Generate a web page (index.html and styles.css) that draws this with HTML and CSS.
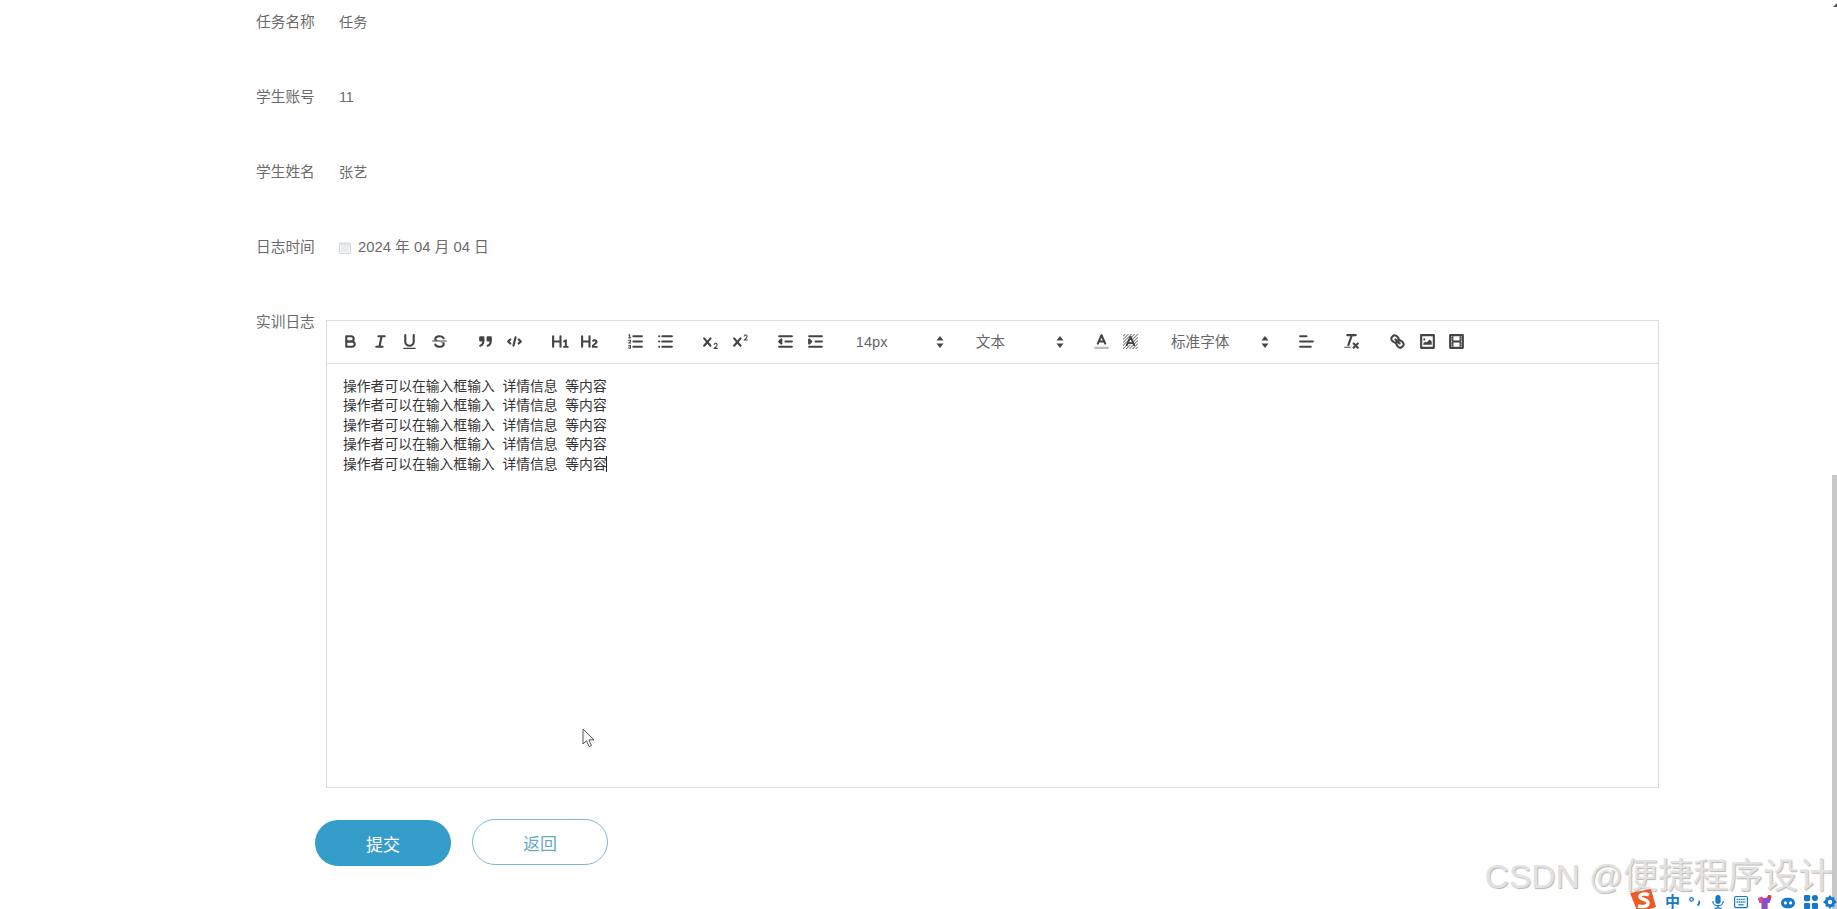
FILE: index.html
```html
<!DOCTYPE html>
<html lang="en">
<head>
    <meta charset="UTF-8">
    <title>实训日志</title>
    <link rel="stylesheet" href="styles.css">
</head>
<body>
    <form class="log-form">
        <div class="field"><label class="field-label">任务名称</label><span class="field-value">任务</span></div>
        <div class="field"><label class="field-label">学生账号</label><span class="field-value">11</span></div>
        <div class="field"><label class="field-label">学生姓名</label><span class="field-value">张艺</span></div>
        <div class="field">
            <label class="field-label">日志时间</label>
            <span class="field-value date-value">
                <svg class="date-icon" viewBox="0 0 12 13"><path d="M.5 2h11v10.5H.5z" fill="#f4f5f7" stroke="#d5d8de"/><path d="M.5 2h11v2.5H.5z" fill="#dfe2e7"/><path d="M2 6h8M2 8h8M2 10h8" stroke="#dfe2e7"/></svg>
                2024 年 04 月 04 日
            </span>
        </div>
        <div class="field editor-field">
            <label class="field-label">实训日志</label>
            <div class="editor">
                <div class="toolbar">
                    <span class="formats">
                        <button type="button" class="tb"><svg viewBox="0 0 18 18"><path class="st" d="M5,4H9.5A2.5,2.5,0,0,1,12,6.5v0A2.5,2.5,0,0,1,9.5,9H5A0,0,0,0,1,5,9V4A0,0,0,0,1,5,4Z"/><path class="st" d="M5,9h5.5A2.5,2.5,0,0,1,13,11.5v0A2.5,2.5,0,0,1,10.5,14H5a0,0,0,0,1,0,0V9A0,0,0,0,1,5,9Z"/></svg></button>
                        <button type="button" class="tb"><svg viewBox="0 0 18 18"><path class="st" d="M7 4h6M5 14h6M8 14l2-10"/></svg></button>
                        <button type="button" class="tb"><svg viewBox="0 0 18 18"><path class="st" d="M5,3V9a4.012,4.012,0,0,0,4,4H9a4.012,4.012,0,0,0,4-4V3"/><rect class="fl" height="1" rx="0.5" width="12" x="3" y="15"/></svg></button>
                        <button type="button" class="tb"><svg viewBox="0 0 18 18"><path class="thin" d="M15.5 8.5h-13"/><path class="fl" d="M9.007,8C6.542,7.791,6,7.519,6,6.5,6,5.792,7.283,5,9,5c1.571,0,2.765.679,2.969,1.309a1,1,0,0,0,1.9-.617C13.356,4.106,11.354,3,9,3,6.2,3,4,4.538,4,6.5a3.2,3.2,0,0,0,.5,1.843Z"/><path class="fl" d="M8.984,10C11.457,10.208,12,10.479,12,11.5c0,.708-1.283,1.5-3,1.5-1.571,0-2.765-.679-2.969-1.309a1,1,0,1,0-1.9.617C4.644,13.894,6.646,15,9,15c2.8,0,5-1.538,5-3.5a3.2,3.2,0,0,0-.5-1.843Z"/></svg></button>
                    </span>
                    <span class="formats">
                        <button type="button" class="tb"><svg viewBox="0 0 18 18"><rect class="fl st" height="3" width="3" x="4" y="5"/><rect class="fl st" height="3" width="3" x="11" y="5"/><path class="st" d="M7,8c0,4.031-3,5-3,5"/><path class="st" d="M14,8c0,4.031-3,5-3,5"/></svg></button>
                        <button type="button" class="tb"><svg viewBox="0 0 18 18"><path class="st" d="M5 7 3 9l2 2M13 7l2 2-2 2M10 5l-2 8"/></svg></button>
                    </span>
                    <span class="formats">
                        <button type="button" class="tb"><svg viewBox="0 0 18 18"><path class="fl" d="M10,4V14a1,1,0,0,1-2,0V10H3v4a1,1,0,0,1-2,0V4A1,1,0,0,1,3,4V8H8V4a1,1,0,0,1,2,0Zm6.06787,9.209H14.98975V7.59863a.54085.54085,0,0,0-.605-.60547h-.62744a1.01119,1.01119,0,0,0-.748.29688L11.645,8.56641a.5435.5435,0,0,0-.022.8584l.28613.30762a.53861.53861,0,0,0,.84717.0332l.09912-.08789a1.2137,1.2137,0,0,0,.2417-.35254h.02246s-.01123.30859-.01123.60547V13.209H12.041a.54085.54085,0,0,0-.605.60547v.43945a.54085.54085,0,0,0,.605.60547h4.02686a.54085.54085,0,0,0,.605-.60547v-.43945A.54085.54085,0,0,0,16.06787,13.209Z"/></svg></button>
                        <button type="button" class="tb"><svg viewBox="0 0 18 18"><path class="fl" d="M16.73975,13.81445v.43945a.54085.54085,0,0,1-.605.60547H11.855a.58392.58392,0,0,1-.64893-.60547V14.0127c0-2.90527,3.39941-3.42187,3.39941-4.55469a.77675.77675,0,0,0-.84717-.78125,1.17684,1.17684,0,0,0-.83594.38477c-.2749.26367-.561.374-.85791.13184l-.4292-.34082c-.30811-.24219-.38525-.51758-.1543-.81445a2.97155,2.97155,0,0,1,2.45361-1.17676,2.45393,2.45393,0,0,1,2.68408,2.40918c0,2.45312-3.1792,2.92676-3.27832,3.93848h2.79443A.54085.54085,0,0,1,16.73975,13.81445ZM9,3A.99974.99974,0,0,0,8,4V8H3V4A1,1,0,0,0,1,4V14a1,1,0,0,0,2,0V10H8v4a1,1,0,0,0,2,0V4A.99974.99974,0,0,0,9,3Z"/></svg></button>
                    </span>
                    <span class="formats">
                        <button type="button" class="tb"><svg viewBox="0 0 18 18"><path class="st" d="M7 4h8M7 9h8M7 14h8"/><path class="thin" d="M2.5 5.5h2"/><path class="fl" d="M3.5,6A0.5,0.5,0,0,1,3,5.5V3.085l-0.276.138A0.5,0.5,0,0,1,2.053,3c-0.124-.247-0.023-0.324.224-0.447l1-.5A0.5,0.5,0,0,1,4,2.5v3A0.5,0.5,0,0,1,3.5,6Z"/><path class="thin" d="M4.5,10.5h-2c0-.234,1.85-1.076,1.85-2.234A0.959,0.959,0,0,0,2.5,8.156"/><path class="thin" d="M2.5,14.846a0.959,0.959,0,0,0,1.85-.109A0.7,0.7,0,0,0,3.75,14a0.688,0.688,0,0,0,.6-0.736,0.959,0.959,0,0,0-1.85-.109"/></svg></button>
                        <button type="button" class="tb"><svg viewBox="0 0 18 18"><path class="st" d="M6 4h9M6 9h9M6 14h9M3 4h0M3 9h0M3 14h0"/></svg></button>
                    </span>
                    <span class="formats">
                        <button type="button" class="tb"><svg viewBox="0 0 18 18"><path class="fl" d="M15.5,15H13.861a3.858,3.858,0,0,0,1.914-2.975,1.8,1.8,0,0,0-1.6-1.751A1.921,1.921,0,0,0,12.021,11.7a0.50013,0.50013,0,1,0,.957.291h0a0.914,0.914,0,0,1,1.053-.725,0.81,0.81,0,0,1,.744.762c0,1.076-1.16971,1.86982-1.93971,2.43082A1.45639,1.45639,0,0,0,12,15.5a0.5,0.5,0,0,0,.5.5h3A0.5,0.5,0,0,0,15.5,15Z"/><path class="fl" d="M9.65,5.241a1,1,0,0,0-1.409.108L6,7.964,3.759,5.349A1,1,0,0,0,2.192,6.59178Q2.21541,6.6213,2.241,6.649L4.684,9.5,2.241,12.35A1,1,0,0,0,3.71,13.70722q0.02557-.02768.049-0.05722L6,11.036,8.241,13.65a1,1,0,1,0,1.567-1.24277Q9.78459,12.3777,9.759,12.35L7.316,9.5,9.759,6.651A1,1,0,0,0,9.65,5.241Z"/></svg></button>
                        <button type="button" class="tb"><svg viewBox="0 0 18 18"><path class="fl" d="M15.5,7H13.861a4.015,4.015,0,0,0,1.914-2.975,1.8,1.8,0,0,0-1.6-1.751A1.922,1.922,0,0,0,12.021,3.7a0.5,0.5,0,1,0,.957.291,0.917,0.917,0,0,1,1.053-.725,0.81,0.81,0,0,1,.744.762c0,1.077-1.164,1.925-1.934,2.486A1.423,1.423,0,0,0,12,7.5a0.5,0.5,0,0,0,.5.5h3A0.5,0.5,0,0,0,15.5,7Z"/><path class="fl" d="M9.651,5.241a1,1,0,0,0-1.41.108L6,7.964,3.759,5.349a1,1,0,1,0-1.519,1.3L4.683,9.5,2.241,12.35a1,1,0,1,0,1.519,1.3L6,11.036,8.241,13.65a1,1,0,0,0,1.519-1.3L7.317,9.5,9.759,6.651A1,1,0,0,0,9.651,5.241Z"/></svg></button>
                    </span>
                    <span class="formats">
                        <button type="button" class="tb"><svg viewBox="0 0 18 18"><path class="st" d="M3 14h12M3 4h12M9 9h6"/><path class="fl st" d="M5 7v4L3 9z"/></svg></button>
                        <button type="button" class="tb"><svg viewBox="0 0 18 18"><path class="st" d="M3 14h12M3 4h12M9 9h6"/><path class="fl st" d="M3 7v4l2-2z"/></svg></button>
                    </span>
                    <span class="picker">14px<svg class="arrows" viewBox="0 0 7 12"><path d="M3.5 0 7 4.5H0zM3.5 12 0 7.5h7z"/></svg></span>
                    <span class="picker">文本<svg class="arrows" viewBox="0 0 7 12"><path d="M3.5 0 7 4.5H0zM3.5 12 0 7.5h7z"/></svg></span>
                    <span class="formats">
                        <button type="button" class="tb"><svg viewBox="0 0 18 18"><path class="under" d="M3 15h12"/><path class="st" d="M5.5 11 9 3l3.5 8M11.63 9H6.38"/></svg></button>
                        <button type="button" class="tb"><svg viewBox="0 0 18 18"><path class="hatch" d="M2 4 4 2M2 7l5-5M2 10l8-8M2 13 13 2M2 16 16 2M5 16 16 5M8 16l8-8M11 16l5-5M14 16l2-2"/><path class="cut" d="M5 12 9 4l4 8z"/><path class="st narrow" d="M5.5 12.5 9 4.5l3.500 8M11.600 10.500H6.400"/></svg></button>
                    </span>
                    <span class="picker picker-wide">标准字体<svg class="arrows" viewBox="0 0 7 12"><path d="M3.5 0 7 4.5H0zM3.5 12 0 7.5h7z"/></svg></span>
                    <span class="formats">
                        <button type="button" class="tb"><svg viewBox="0 0 18 18"><path class="st" d="M3 9h12M3 14h10M3 4h6"/></svg></button>
                    </span>
                    <span class="formats">
                        <button type="button" class="tb"><svg viewBox="0 0 18 18"><path class="st" d="M5 3h8M6 12.500 9.350 3M11 11l4 4M15 11l-4 4"/><rect class="fl" height="1" rx="0.5" width="6" x="2" y="14"/></svg></button>
                    </span>
                    <span class="formats">
                        <button type="button" class="tb"><svg viewBox="0 0 18 18"><path class="st" d="M7 7l4 4"/><path class="st" d="M8.9,4.577a3.476,3.476,0,0,1,.36,4.679A3.476,3.476,0,0,1,4.577,8.9C3.185,7.5,2.035,6.4,4.217,4.217S7.5,3.185,8.9,4.577Z"/><path class="st" d="M13.423,9.1a3.476,3.476,0,0,0-4.679-.36,3.476,3.476,0,0,0,.36,4.679c1.392,1.392,2.5,2.542,4.679.36S14.815,10.5,13.423,9.1Z"/></svg></button>
                        <button type="button" class="tb"><svg viewBox="0 0 18 18"><rect class="st" height="12" width="12" x="3" y="3"/><circle class="fl" cx="6" cy="7" r="1"/><path class="fl" d="M5 12v-1l2-2 1 1 3-3 2 2v3z"/></svg></button>
                        <button type="button" class="tb"><svg viewBox="0 0 18 18"><rect class="st" height="12" width="12" x="3" y="3"/><rect class="fl" height="12" width="1" x="5" y="3"/><rect class="fl" height="12" width="1" x="12" y="3"/><rect class="fl" height="2" width="8" x="5" y="8"/><rect class="fl" height="1" width="3" x="3" y="5"/><rect class="fl" height="1" width="3" x="3" y="7"/><rect class="fl" height="1" width="3" x="3" y="10"/><rect class="fl" height="1" width="3" x="3" y="12"/><rect class="fl" height="1" width="3" x="12" y="5"/><rect class="fl" height="1" width="3" x="12" y="7"/><rect class="fl" height="1" width="3" x="12" y="10"/><rect class="fl" height="1" width="3" x="12" y="12"/></svg></button>
                    </span>
                </div>
                <div class="editor-body">
                    <p>操作者可以在输入框输入  详情信息  等内容</p>
                    <p>操作者可以在输入框输入  详情信息  等内容</p>
                    <p>操作者可以在输入框输入  详情信息  等内容</p>
                    <p>操作者可以在输入框输入  详情信息  等内容</p>
                    <p>操作者可以在输入框输入  详情信息  等内容<span class="caret"></span></p>
                </div>
            </div>
        </div>
        <div class="actions">
            <button type="button" class="btn btn-submit">提交</button>
            <button type="button" class="btn btn-back">返回</button>
        </div>
    </form>

    <!-- things on top of the page -->
    <svg class="cursor" viewBox="0 0 13 20"><path d="M1 1v15l3.500-3.300L7 18.500l2.500-1-2.600-5.600H12z" fill="#fff" stroke="#555" stroke-width="1"/></svg>
    <div class="scroll-up"></div>
    <div class="scroll-thumb"></div>
    <div class="watermark"><span class="watermark-latin">CSDN @</span>便捷程序设计</div>
    <div class="tray">
        <svg class="tray-sogou" viewBox="0 0 26 24"><path d="M0 4 21 0l5 18-18 6z" fill="#ee5a24"/><path d="M19 6C15 4 9 5 10 8c1 3 8 2 8 6 0 4-6 4-10 3" fill="none" stroke="#fff" stroke-width="3.500"/></svg>
        <span class="tray-zh">中</span>
        <svg class="tray-icon" viewBox="0 0 16 14"><circle cx="4" cy="4" r="2" fill="none" stroke="#1878c8" stroke-width="1.500"/><path d="M12 6c1.500 0 1 3-1 5" fill="none" stroke="#1878c8" stroke-width="2.200"/></svg>
        <svg class="tray-icon" viewBox="0 0 16 16"><rect x="5" y="0" width="6" height="10" rx="3" fill="#1878c8"/><path d="M2 7c0 7 12 7 12 0M8 12v3M4 15h8" fill="none" stroke="#1878c8" stroke-width="1.500"/></svg>
        <svg class="tray-icon" viewBox="0 0 16 14"><rect x=".7" y=".7" width="14.600" height="12.600" rx="1.500" fill="none" stroke="#1878c8" stroke-width="1.400"/><path d="M3 4h10M3 7h10" stroke="#1878c8" stroke-width="1.600" stroke-dasharray="1.600 .6"/><path d="M5 10.200h6" stroke="#1878c8" stroke-width="1.400"/></svg>
        <svg class="tray-icon tray-shirt" viewBox="0 0 18 18"><path d="M1 4l4-2c2 2 5 2 7 0l4 2-2 5h-2v8H5V9H3z" fill="#8a4fc8"/><path d="M1 4l4-2 2 1-2 6H3z" fill="#e8478c"/><circle cx="14" cy="2" r="2.200" fill="#e5352b"/></svg>
        <svg class="tray-icon" viewBox="0 0 16 14"><rect x="0" y="2" width="16" height="12" rx="6" fill="#1878c8"/><circle cx="5" cy="8" r="1.800" fill="#fff"/><circle cx="11" cy="8" r="1.800" fill="#fff"/></svg>
        <svg class="tray-icon" viewBox="0 0 16 16"><rect x="0" y="0" width="7" height="7" rx="1.500" fill="#1878c8"/><rect x="9" y="0" width="7" height="7" rx="3.500" fill="#1878c8"/><rect x="0" y="9" width="7" height="7" rx="1.500" fill="#1878c8"/><rect x="9" y="9" width="7" height="7" rx="1.500" fill="#1878c8"/></svg>
        <svg class="tray-icon tray-gear" viewBox="0 0 16 16"><path d="M8 0l2 2.500h3v3L16 8l-3 2.500v3h-3L8 16l-2-2.500H3v-3L0 8l3-2.500v-3h3z" fill="#1878c8"/><circle cx="8" cy="8" r="2.500" fill="#fff"/></svg>
    </div>
</body>
</html>
```

FILE: styles.css
```css
* {
    box-sizing: border-box;
}
html, body {
    margin: 0;
    height: 100%;
    overflow: hidden;
    background: #fff;
}
body {
    font-family: "Liberation Sans", "Noto Sans CJK SC", sans-serif;
    color: #666;
    position: relative;
}
.log-form {
    padding: 1px 0 0 256px;
    width: 1659px;
}
.field {
    display: flex;
    height: 42px;
    margin-bottom: 33px;
    line-height: 42px;
    font-size: 14.2px;
}
.field-label {
    width: 60px;
    flex: none;
    font-size: 14.7px;
    color: #6b6b6b;
}
.field-value {
    margin-left: 23px;
    color: #6b6b6b;
}
.date-value {
    display: flex;
    align-items: center;
    gap: 7px;
    font-size: 14.8px;
}
.date-icon {
    width: 12px;
    height: 13px;
}
.editor-field {
    height: auto;
    margin-bottom: 0;
}
.editor {
    flex: 1;
    margin: 19px 0 0 10px;
    height: 468px;
    border: 1px solid #ddd;
    display: flex;
    flex-direction: column;
    line-height: normal;
}
.toolbar {
    display: flex;
    align-items: center;
    height: 43px;
    flex: none;
    padding: 0 8px 1px 9px;
    border-bottom: 1px solid #ddd;
}
.formats {
    display: flex;
    margin-right: 16px;
}
.tb {
    width: 29.6px;
    height: 26px;
    padding: 0;
    border: 0;
    background: none;
    display: flex;
    align-items: center;
    justify-content: center;
}
.tb svg {
    width: 19px;
    height: 19px;
}
.st {
    fill: none;
    stroke: #444;
    stroke-width: 2;
    stroke-linecap: round;
    stroke-linejoin: round;
}
.thin {
    fill: none;
    stroke: #444;
    stroke-width: 1;
    stroke-linecap: round;
    stroke-linejoin: round;
}
.fl {
    fill: #444;
}
.st.fl {
    fill: #444;
}
.under {
    stroke: #bbb;
    stroke-width: 2;
    stroke-linecap: round;
}
.hatch {
    stroke: #888;
    stroke-width: 1;
}
.cut {
    fill: #fff;
}
.narrow {
    stroke-width: 1.800;
}
.picker {
    position: relative;
    width: 104px;
    margin-right: 16px;
    padding-left: 9.5px;
    font-size: 14.6px;
    line-height: 24px;
    color: #666;
    flex: none;
}
.picker-wide {
    width: 114px;
}
.arrows {
    position: absolute;
    right: 6.5px;
    top: 6px;
    width: 8px;
    height: 12px;
    fill: #444;
}
.editor-body {
    flex: 1;
    padding: 12.5px 16px;
    font-size: 13.8px;
    line-height: 19.5px;
    color: #333;
}
.editor-body p {
    margin: 0;
    white-space: pre-wrap;
}
.caret {
    display: inline-block;
    width: 1px;
    height: 16px;
    margin-left: -1px;
    background: #222;
    vertical-align: -3px;
}
.actions {
    display: flex;
    align-items: flex-start;
    gap: 21px;
    margin-top: 32px;
    padding-left: 59px;
}
.btn {
    width: 136px;
    height: 46px;
    border-radius: 23px;
    font-family: inherit;
    font-size: 17px;
}
.btn-submit {
    background: #359dc9;
    border: 0;
    color: #fff;
}
.btn-back {
    margin-top: -1px;
    background: #fff;
    border: 1.5px solid #7db9d2;
    color: #6aa9c6;
}
.cursor {
    position: absolute;
    left: 582px;
    top: 728px;
    width: 13px;
    height: 20px;
}
.scroll-up {
    position: absolute;
    right: 0;
    top: 3px;
    width: 0;
    height: 0;
    border-left: 4px solid transparent;
    border-bottom: 4px solid #555;
}
.scroll-thumb {
    position: absolute;
    right: 0;
    top: 475px;
    bottom: 0;
    width: 5px;
    background: #c8c8c8;
}
.watermark {
    position: absolute;
    right: 4px;
    top: 854px;
    font-size: 35px;
    line-height: 44px;
    color: #e2e2e2;
    text-shadow: 1px 1px 1px #b8b8b8;
    white-space: nowrap;
}
.watermark-latin {
    font-size: 33.5px;
}
.tray {
    position: absolute;
    left: 1630px;
    right: 0;
    top: 889px;
    bottom: 0;
    display: flex;
    align-items: flex-start;
    overflow: hidden;
}
.tray-sogou {
    width: 26px;
    height: 24px;
    flex: none;
    margin-right: 9px;
}
.tray-zh {
    font-size: 15px;
    font-weight: bold;
    color: #1878c8;
    flex: none;
    width: 23px;
    line-height: 16px;
    margin-top: 5px;
}
.tray-icon {
    width: 14px;
    height: 14px;
    flex: none;
    margin: 6px 9px 0 0;
}
.tray-shirt {
    width: 16px;
    height: 16px;
    margin-right: 8px;
}
.tray-gear {
    margin-left: -4px;
}
```
